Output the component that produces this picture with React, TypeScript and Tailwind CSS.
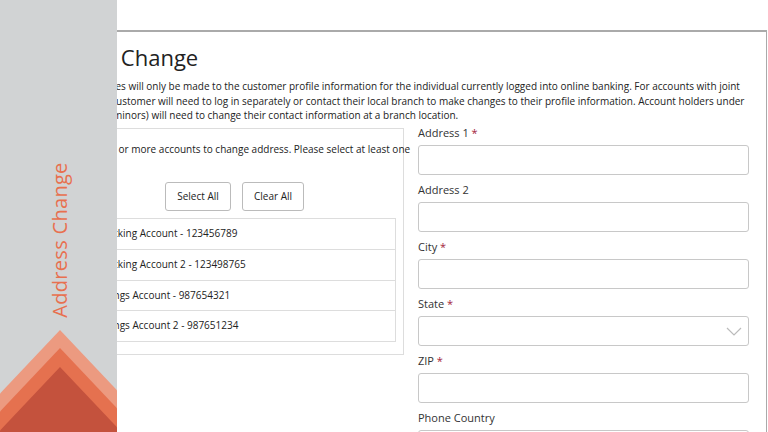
import React from "react";

const F = { fontFamily: '"Open Sans", "Noto Sans", sans-serif' };

function Field({ label, req, select }: { label: string; req?: boolean; select?: boolean }) {
  return (
    <div className="flex flex-col">
      <div className="text-[11px] text-[#333] h-[15px] leading-[15px]">
        {label} {req && <span className="text-[#a3243b]">*</span>}
      </div>
      <div className="mt-[5px] h-[30px] border border-[#c8c8c8] rounded-[3px] bg-white relative">
        {select && (
          <svg className="absolute right-[6px] top-[10px]" width="16" height="10" viewBox="0 0 16 10">
            <path d="M1 1 L8 8 L15 1" fill="none" stroke="#bbb" strokeWidth="1.2" />
          </svg>
        )}
      </div>
    </div>
  );
}

export default function App() {
  const accounts = [
    "Checking Account - 123456789",
    "Checking Account 2 - 123498765",
    "Savings Account - 987654321",
    "Savings Account 2 - 987651234",
  ];
  return (
    <div className="relative w-[768px] h-[432px] overflow-hidden bg-white" style={F}>
      <div className="mt-[30px] ml-[28px] mr-[1px] h-[402px] border-t-2 border-r border-l border-[#aaa] pl-[12px] pr-[17px]">
        <div className="text-[22px] text-[#222] mt-[10px] leading-[30px] -ml-[9px]">Address Change</div>
        <div className="text-[10px] text-[#222] leading-[14.5px] mt-[7px] ml-[6px] whitespace-nowrap">
          Address changes will only be made to the customer profile information for the individual currently logged into online banking. For accounts with joint<br />
          owners, each customer will need to log in separately or contact their local branch to make changes to their profile information. Account holders under<br />
          the age of 18 (minors) will need to change their contact information at a branch location.
        </div>
        <div className="flex mt-[5px]">
          <div className="w-[363px] h-[227px] border border-[#ddd] pl-[26px] pr-[7px]">
            <div className="text-[10px] text-[#222] mt-[13px] leading-[14px] whitespace-nowrap">
              Select one or more accounts to change address. Please select at least one<br />
              account.
            </div>
            <div className="flex gap-[11px] mt-[12px] pl-[97px]">
              <button className="w-[66px] h-[29px] border border-[#bbb] rounded-[3px] text-[10px] text-[#222]">Select All</button>
              <button className="w-[62px] h-[29px] border border-[#bbb] rounded-[3px] text-[10px] text-[#222]">Clear All</button>
            </div>
            <div className="mt-[7px] border border-[#ddd]">
              {accounts.map((a, i) => (
                <div key={a} className={`h-[30.5px] flex items-center pl-[26px] text-[10px] text-[#222] ${i ? "border-t border-[#ddd]" : ""}`}>
                  {a}
                </div>
              ))}
            </div>
          </div>
          <div className="flex-1 ml-[14px] -mt-[3px] flex flex-col gap-[7px]">
            <Field label="Address 1" req />
            <Field label="Address 2" />
            <Field label="City" req />
            <Field label="State" req select />
            <Field label="ZIP" req />
            <Field label="Phone Country" />
          </div>
        </div>
      </div>
      <div className="absolute left-0 top-0 w-[117px] h-[432px] bg-[#d1d3d4] overflow-hidden">
        <div className="absolute left-[60px] top-[240px] -translate-x-1/2 -translate-y-1/2 -rotate-90 whitespace-nowrap text-[20px] text-[#e8704f] tracking-[0.3px]">
          Address Change
        </div>
        <svg className="absolute left-0 top-0" width="117" height="432" viewBox="0 0 117 432">
          <polygon points="60,330 180,457 -60,457" fill="#ec9a80" />
          <polygon points="60,348 180,475 -60,475" fill="#e5714f" />
          <polygon points="60,367 180,494 -60,494" fill="#c4523d" />
        </svg>
      </div>
    </div>
  );
}
